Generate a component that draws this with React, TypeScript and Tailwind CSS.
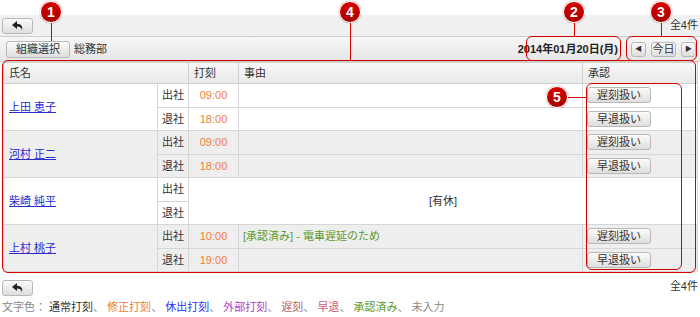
import React from "react";

const font = { fontFamily: '"Liberation Sans", "Noto Sans CJK JP", sans-serif' };

function BackIcon() {
  return (
    <svg width="12" height="10" viewBox="0 0 12 10">
      <path d="M5 0 L0 4 L5 8 L5 5.5 C8 5.5 9.5 6.5 10 9.5 C11 5 9 2.8 5 2.7 Z" fill="#222" />
    </svg>
  );
}

function Btn({ children, className = "" }: { children: React.ReactNode; className?: string }) {
  return (
    <button
      className={`flex items-center justify-center rounded-[3px] border border-[#b8b8b8] bg-gradient-to-b from-[#fbfbfb] to-[#dedede] text-[11px] text-[#333] ${className}`}
    >
      {children}
    </button>
  );
}

function Marker({ n, x, y }: { n: number; x: number; y: number }) {
  return (
    <div
      className="absolute flex h-[22px] w-[22px] items-center justify-center rounded-full border border-white bg-gradient-to-b from-[#d80000] to-[#a80000] text-[14px] font-bold text-white shadow-[0_0_1px_#900]"
      style={{ left: x - 11, top: y - 11 }}
    >
      {n}
    </div>
  );
}

type Person = {
  name: string;
  bg: string;
  inTime?: string;
  outTime?: string;
  note?: string;
  holiday?: boolean;
};

const people: Person[] = [
  { name: "上田 恵子", bg: "bg-white", inTime: "09:00", outTime: "18:00" },
  { name: "河村 正二", bg: "bg-[#eeeeee]", inTime: "09:00", outTime: "18:00" },
  { name: "柴崎 純平", bg: "bg-white", holiday: true },
  { name: "上村 桃子", bg: "bg-[#eeeeee]", inTime: "10:00", outTime: "19:00", note: "[承認済み] - 電車遅延のため" },
];

const td = "border border-[#d6d6d6] h-[23.5px] p-0";

export default function App() {
  return (
    <div className="relative h-[317px] w-[700px] overflow-hidden bg-white text-[11px] text-[#333]" style={font}>
      <div className="h-[15px]" />
      <div className="flex h-[21px] items-center justify-between bg-[#f0f0f0] pl-[2px] pr-[2px]">
        <Btn className="h-[16px] w-[31px]">
          <BackIcon />
        </Btn>
        <span>全4件</span>
      </div>
      <div className="flex h-[26px] items-center justify-between border-y border-[#cfcfcf] bg-gradient-to-b from-[#f7f7f7] to-[#e6e6e6] pl-[6px] pr-[4px]">
        <div className="flex items-center gap-[4px]">
          <Btn className="h-[17px] w-[64px]">組織選択</Btn>
          <span>総務部</span>
        </div>
        <div className="flex items-center">
          <span className="mr-[13px] font-bold text-[#222]">2014年01月20日(月)</span>
          <Btn className="h-[15px] w-[15px]">
            <span className="text-[7px]">◀</span>
          </Btn>
          <Btn className="ml-[5px] h-[15px] w-[25px]">今日</Btn>
          <Btn className="ml-[5px] h-[15px] w-[15px]">
            <span className="text-[7px]">▶</span>
          </Btn>
        </div>
      </div>

      <table className="ml-[3px] w-[694px] table-fixed border-collapse">
        <colgroup>
          <col className="w-[154px]" />
          <col className="w-[31px]" />
          <col className="w-[50px]" />
          <col className="w-[344px]" />
          <col className="w-[115px]" />
        </colgroup>
        <thead>
          <tr className="h-[21px] bg-gradient-to-b from-[#f8f8f8] to-[#e8e8e8] text-left">
            <th colSpan={2} className="border border-[#d0d0d0] pl-[5px] font-normal">氏名</th>
            <th className="border border-[#d0d0d0] pl-[5px] font-normal">打刻</th>
            <th className="border border-[#d0d0d0] pl-[5px] font-normal">事由</th>
            <th className="border border-[#d0d0d0] pl-[5px] font-normal">承認</th>
          </tr>
        </thead>
        <tbody>
          {people.map((p) => (
            <React.Fragment key={p.name}>
              <tr className={p.bg}>
                <td rowSpan={2} className={`${td} border-t-[#c4c4c4] pl-[5px]`}>
                  <a className="text-[#2a2ad0] underline">{p.name}</a>
                </td>
                <td className={`${td} border-t-[#c4c4c4] text-center`}>出社</td>
                {p.holiday ? (
                  <td rowSpan={2} colSpan={3} className={`${td} border-t-[#c4c4c4] text-center`}>
                    [有休]
                  </td>
                ) : (
                  <>
                    <td className={`${td} border-t-[#c4c4c4] text-center text-[#f0803a]`}>{p.inTime}</td>
                    <td className={`${td} border-t-[#c4c4c4] pl-[4px] text-[#5c9a2c]`}>{p.note}</td>
                    <td className={`${td} border-t-[#c4c4c4] pl-[4px]`}>
                      <Btn className="h-[16px] w-[64px]">遅刻扱い</Btn>
                    </td>
                  </>
                )}
              </tr>
              <tr className={p.bg}>
                <td className={`${td} text-center`}>退社</td>
                {!p.holiday && (
                  <>
                    <td className={`${td} text-center text-[#f0803a]`}>{p.outTime}</td>
                    <td className={td}></td>
                    <td className={`${td} pl-[4px]`}>
                      <Btn className="h-[16px] w-[64px]">早退扱い</Btn>
                    </td>
                  </>
                )}
              </tr>
            </React.Fragment>
          ))}
        </tbody>
      </table>

      <div className="mt-[8px] flex items-center justify-between pl-[2px] pr-[2px]">
        <Btn className="h-[16px] w-[31px]">
          <BackIcon />
        </Btn>
        <span className="-mt-[4px]">全4件</span>
      </div>
      <div className="mt-[3px] pl-[2px] text-[11px] text-[#888]">
        文字色： <span className="text-[#333]">通常打刻</span>、 <span className="text-[#f07a3a]">修正打刻</span>、{" "}
        <span className="text-[#2f2fff]">休出打刻</span>、 <span className="text-[#b43cc8]">外部打刻</span>、{" "}
        <span className="text-[#b06a6a]">遅刻</span>、 <span className="text-[#c8607a]">早退</span>、{" "}
        <span className="text-[#5c9a2c]">承認済み</span>、 <span className="text-[#888]">未入力</span>
      </div>

      {/* annotation overlay */}
      <div className="pointer-events-none absolute inset-0">
        <div className="absolute left-[526px] top-[36px] h-[25px] w-[95px] rounded-[6px] border-[1.5px] border-[#d40000]" />
        <div className="absolute left-[626px] top-[36px] h-[25px] w-[71px] rounded-[6px] border-[1.5px] border-[#d40000]" />
        <div className="absolute left-[2px] top-[60px] h-[213px] w-[694px] rounded-[6px] border-[1.5px] border-[#d40000]" />
        <div className="absolute left-[586px] top-[83px] h-[187px] w-[96px] rounded-[6px] border-[1.5px] border-[#d40000]" />
        <div className="absolute left-[51px] top-[20px] h-[21px] w-px bg-[#d40000]" />
        <div className="absolute left-[350px] top-[20px] h-[40px] w-px bg-[#d40000]" />
        <div className="absolute left-[574px] top-[20px] h-[16px] w-px bg-[#d40000]" />
        <div className="absolute left-[661px] top-[20px] h-[16px] w-px bg-[#d40000]" />
        <div className="absolute left-[566px] top-[97px] h-px w-[20px] bg-[#d40000]" />
        <Marker n={1} x={51} y={12} />
        <Marker n={4} x={350} y={12} />
        <Marker n={2} x={574} y={12} />
        <Marker n={3} x={661} y={12} />
        <Marker n={5} x={557} y={97} />
      </div>
    </div>
  );
}
